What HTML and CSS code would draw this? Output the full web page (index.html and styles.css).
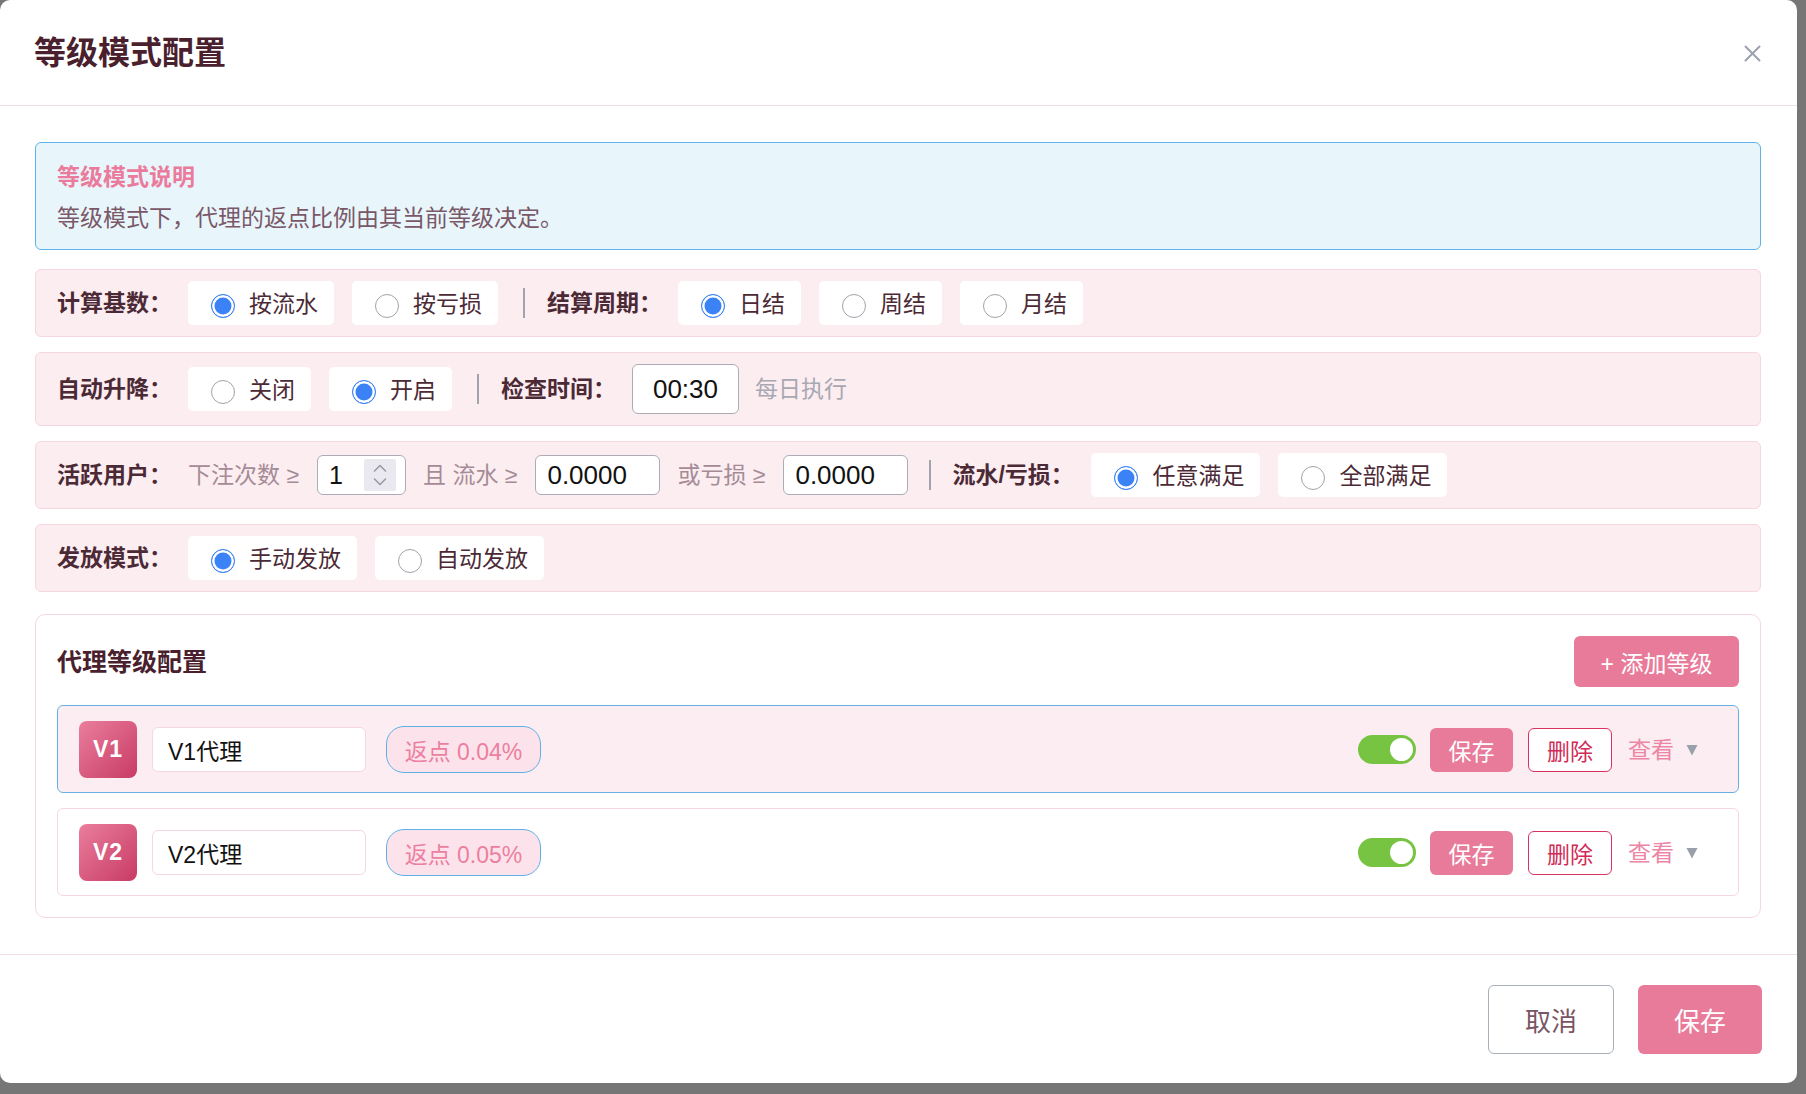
FILE: index.html
```html
<!DOCTYPE html>
<html lang="zh-CN">
<head>
<meta charset="utf-8">
<title>等级模式配置</title>
<link rel="stylesheet" href="styles.css">
</head>
<body>
<div class="dialog">
  <header class="dlg-head">
    <h1 class="dlg-title">等级模式配置</h1>
    <button class="close-btn" aria-label="关闭">
      <svg width="17" height="17" viewBox="0 0 17 17"><path d="M1.5 1.5 L15.5 15.5 M15.5 1.5 L1.5 15.5" stroke="#9ca1ad" stroke-width="2" stroke-linecap="round" fill="none"/></svg>
    </button>
  </header>

  <div class="dlg-body">
    <div class="info-box">
      <div class="info-title">等级模式说明</div>
      <div class="info-text">等级模式下，代理的返点比例由其当前等级决定。</div>
    </div>

    <div class="form-row">
      <span class="row-label">计算基数：</span>
      <label class="opt"><span class="radio on"></span><span>按流水</span></label>
      <label class="opt"><span class="radio"></span><span>按亏损</span></label>
      <span class="vsep"></span>
      <span class="row-label">结算周期：</span>
      <label class="opt"><span class="radio on"></span><span>日结</span></label>
      <label class="opt"><span class="radio"></span><span>周结</span></label>
      <label class="opt"><span class="radio"></span><span>月结</span></label>
    </div>

    <div class="form-row">
      <span class="row-label">自动升降：</span>
      <label class="opt"><span class="radio"></span><span>关闭</span></label>
      <label class="opt"><span class="radio on"></span><span>开启</span></label>
      <span class="vsep"></span>
      <span class="row-label">检查时间：</span>
      <div class="time-input">00:30</div>
      <span class="hint">每日执行</span>
    </div>

    <div class="form-row">
      <span class="row-label">活跃用户：</span>
      <span class="muted">下注次数 ≥</span>
      <div class="num-input">
        <span>1</span>
        <span class="spin">
          <svg width="32" height="32" viewBox="0 0 32 32"><path d="M10.5 12 L16 6.5 L21.5 12 M10.5 20 L16 25.5 L21.5 20" stroke="#9a9aa6" stroke-width="1.6" fill="none" stroke-linecap="round" stroke-linejoin="round"/></svg>
        </span>
      </div>
      <span class="muted">且 流水 ≥</span>
      <div class="dec-input">0.0000</div>
      <span class="muted">或亏损 ≥</span>
      <div class="dec-input">0.0000</div>
      <span class="vsep wide"></span>
      <span class="row-label long">流水/亏损：</span>
      <label class="opt"><span class="radio on"></span><span>任意满足</span></label>
      <label class="opt"><span class="radio"></span><span>全部满足</span></label>
    </div>

    <div class="form-row last">
      <span class="row-label">发放模式：</span>
      <label class="opt"><span class="radio on"></span><span>手动发放</span></label>
      <label class="opt"><span class="radio"></span><span>自动发放</span></label>
    </div>

    <section class="card">
      <div class="card-head">
        <h2 class="card-title">代理等级配置</h2>
        <button class="add-btn">+ 添加等级</button>
      </div>

      <div class="level-row active">
        <div class="badge">V1</div>
        <div class="name-input">V1代理</div>
        <div class="pill">返点 0.04%</div>
        <div class="row-actions">
          <span class="toggle"><span class="knob"></span></span>
          <button class="btn-save-sm">保存</button>
          <button class="btn-del">删除</button>
          <span class="view">查看<svg class="caret" width="12" height="12" viewBox="0 0 12 12"><path d="M0.5 1 L11.5 1 L6 11.5 Z" fill="#9aa0ab"/></svg></span>
        </div>
      </div>

      <div class="level-row">
        <div class="badge">V2</div>
        <div class="name-input">V2代理</div>
        <div class="pill">返点 0.05%</div>
        <div class="row-actions">
          <span class="toggle"><span class="knob"></span></span>
          <button class="btn-save-sm">保存</button>
          <button class="btn-del">删除</button>
          <span class="view">查看<svg class="caret" width="12" height="12" viewBox="0 0 12 12"><path d="M0.5 1 L11.5 1 L6 11.5 Z" fill="#9aa0ab"/></svg></span>
        </div>
      </div>
    </section>
  </div>

  <footer class="dlg-foot">
    <button class="btn-cancel">取消</button>
    <button class="btn-primary">保存</button>
  </footer>
</div>
</body>
</html>
```

FILE: styles.css
```css
* {
  box-sizing: border-box;
}

html, body {
  margin: 0;
  padding: 0;
}

body {
  width: 1806px;
  height: 1094px;
  overflow: hidden;
  background: #767676;
  font-family: "Liberation Sans", "Noto Sans CJK SC", sans-serif;
  color: #4b2a36;
}

button {
  font-family: inherit;
  cursor: pointer;
}

.dialog {
  width: 1797px;
  height: 1083px;
  background: #ffffff;
  border-radius: 10px;
  display: flex;
  flex-direction: column;
  overflow: hidden;
}

/* header */
.dlg-head {
  height: 106px;
  flex: none;
  border-bottom: 1px solid #f3dde5;
  display: flex;
  align-items: center;
  justify-content: space-between;
  padding: 0 36px 0 34px;
}

.dlg-title {
  margin: 0;
  font-size: 32px;
  line-height: 40px;
  font-weight: 700;
  color: #4a1f2e;
}

.close-btn {
  width: 17px;
  height: 17px;
  padding: 0;
  border: none;
  background: transparent;
  display: flex;
  margin-top: 2px;
}

/* body */
.dlg-body {
  flex: none;
  padding: 36px 36px 36px 35px;
}

.info-box {
  border: 1px solid #5db3e8;
  background: #e8f6fb;
  border-radius: 6px;
  padding: 17px 21px 15px;
  margin-bottom: 19px;
}

.info-title {
  font-size: 23px;
  line-height: 34px;
  font-weight: 600;
  color: #ea7b9d;
}

.info-text {
  margin-top: 8px;
  font-size: 23px;
  line-height: 32px;
  color: #7a5868;
}

.form-row {
  display: flex;
  align-items: center;
  background: #fcedf1;
  border: 1px solid #f6d6df;
  border-radius: 6px;
  padding: 11px 21px;
  margin-bottom: 15px;
}

.form-row.last {
  margin-bottom: 22px;
}

.row-label {
  width: 131px;
  flex: none;
  font-size: 23px;
  line-height: 30px;
  font-weight: 700;
  color: #4b2a36;
  white-space: nowrap;
}

.row-label.long {
  width: 139px;
}

.opt {
  display: flex;
  align-items: center;
  height: 44px;
  padding: 0 16px 0 23px;
  background: #ffffff;
  border-radius: 5px;
  margin-right: 18px;
  font-size: 23px;
  line-height: 30px;
  color: #4b2a36;
  white-space: nowrap;
}

.opt span:last-child {
  margin-top: 2px;
}

.radio {
  width: 24px;
  height: 24px;
  flex: none;
  border-radius: 50%;
  border: 1.5px solid #a2a2ab;
  background: #ffffff;
  margin-right: 14px;
  margin-top: 5px;
}

.radio.on {
  border-color: #3b82f6;
  background: #3b82f6;
  box-shadow: inset 0 0 0 2.5px #ffffff;
}

.vsep {
  width: 2px;
  height: 30px;
  flex: none;
  background: #a3a3ad;
  margin: 0 22px 0 7px;
}

.vsep.wide {
  margin: 0 21px 0 4px;
}

.time-input {
  width: 107px;
  height: 50px;
  border: 1px solid #acacb6;
  border-radius: 6px;
  background: #ffffff;
  display: flex;
  align-items: center;
  justify-content: center;
  font-size: 26px;
  color: #111111;
}

.hint {
  margin-left: 16px;
  font-size: 23px;
  line-height: 30px;
  color: #a8a8b2;
}

.muted {
  font-size: 23px;
  line-height: 30px;
  color: #a58b96;
  margin-right: 18px;
  white-space: nowrap;
}

.num-input {
  width: 89px;
  height: 40px;
  border: 1px solid #acacb6;
  border-radius: 6px;
  background: #ffffff;
  display: flex;
  align-items: center;
  padding-left: 11px;
  font-size: 25px;
  color: #111111;
  margin-right: 17px;
}

.spin {
  margin-left: auto;
  margin-right: 9px;
  width: 32px;
  height: 32px;
  background: #e9e9ef;
  border-radius: 2px;
  display: flex;
}

.dec-input {
  width: 125px;
  height: 40px;
  border: 1px solid #acacb6;
  border-radius: 6px;
  background: #ffffff;
  display: flex;
  align-items: center;
  padding-left: 11px;
  font-size: 26px;
  color: #111111;
  margin-right: 17px;
}

/* card */
.card {
  border: 1px solid #f6d6df;
  border-radius: 10px;
  padding: 21px;
  background: #ffffff;
}

.card-head {
  display: flex;
  justify-content: space-between;
  align-items: center;
  margin-bottom: 18px;
}

.card-title {
  margin: 0;
  font-size: 25px;
  line-height: 34px;
  font-weight: 700;
  color: #4a1f2e;
}

.add-btn {
  width: 165px;
  height: 51px;
  border: none;
  border-radius: 6px;
  background: #e87b9a;
  color: #ffffff;
  font-size: 23px;
}

.level-row {
  display: flex;
  align-items: center;
  border: 1px solid #f6d6df;
  border-radius: 6px;
  padding: 15px 21px 14px;
  margin-bottom: 15px;
  background: #ffffff;
}

.level-row:last-child {
  margin-bottom: 0;
}

.level-row.active {
  background: #fbedf1;
  border-color: #66b1e3;
}

.badge {
  width: 58px;
  height: 57px;
  flex: none;
  border-radius: 8px;
  background: linear-gradient(135deg, #ea7e9d 0%, #c83b64 100%);
  color: #ffffff;
  font-weight: 700;
  font-size: 23px;
  letter-spacing: 1px;
  display: flex;
  align-items: center;
  justify-content: center;
}

.name-input {
  width: 214px;
  height: 45px;
  margin-left: 15px;
  border: 1px solid #f6d6df;
  border-radius: 6px;
  background: #ffffff;
  padding-left: 15px;
  font-size: 23px;
  color: #111111;
  display: flex;
  align-items: center;
}

.pill {
  margin-left: 20px;
  width: 155px;
  height: 47px;
  border: 1.5px solid #5fb0e6;
  border-radius: 18px;
  background: #fce3eb;
  color: #ec7fa0;
  font-size: 23px;
  display: flex;
  align-items: center;
  justify-content: center;
  white-space: nowrap;
}

.row-actions {
  margin-left: auto;
  display: flex;
  align-items: center;
}

.toggle {
  width: 58px;
  height: 29px;
  border-radius: 15px;
  background: #76c442;
  display: flex;
  align-items: center;
  justify-content: flex-end;
  padding-right: 3px;
}

.knob {
  width: 23px;
  height: 23px;
  border-radius: 50%;
  background: #ffffff;
}

.btn-save-sm {
  margin-left: 14px;
  width: 83px;
  height: 44px;
  border: none;
  border-radius: 6px;
  background: #e87b9a;
  color: #ffffff;
  font-size: 23px;
  padding: 0;
}

.btn-del {
  margin-left: 15px;
  width: 84px;
  height: 44px;
  border: 1.5px solid #d8335f;
  border-radius: 6px;
  background: #ffffff;
  color: #cf2b56;
  font-size: 23px;
  padding: 0;
}

.view {
  margin-left: 16px;
  padding-right: 19px;
  font-size: 23px;
  line-height: 30px;
  color: #ec86a6;
  display: flex;
  align-items: center;
}

.caret {
  margin-left: 12px;
}

/* footer */
.dlg-foot {
  flex: none;
  border-top: 1px solid #f3dde5;
  display: flex;
  justify-content: flex-end;
  gap: 24px;
  padding: 30px 35px 29px;
}

.btn-cancel {
  width: 126px;
  height: 69px;
  border: 1px solid #a9aebb;
  border-radius: 6px;
  background: #ffffff;
  color: #7a5563;
  font-size: 26px;
  padding: 0;
}

.btn-primary {
  width: 124px;
  height: 69px;
  border: none;
  border-radius: 6px;
  background: #e87b9a;
  color: #ffffff;
  font-size: 26px;
  padding: 0;
}
```
